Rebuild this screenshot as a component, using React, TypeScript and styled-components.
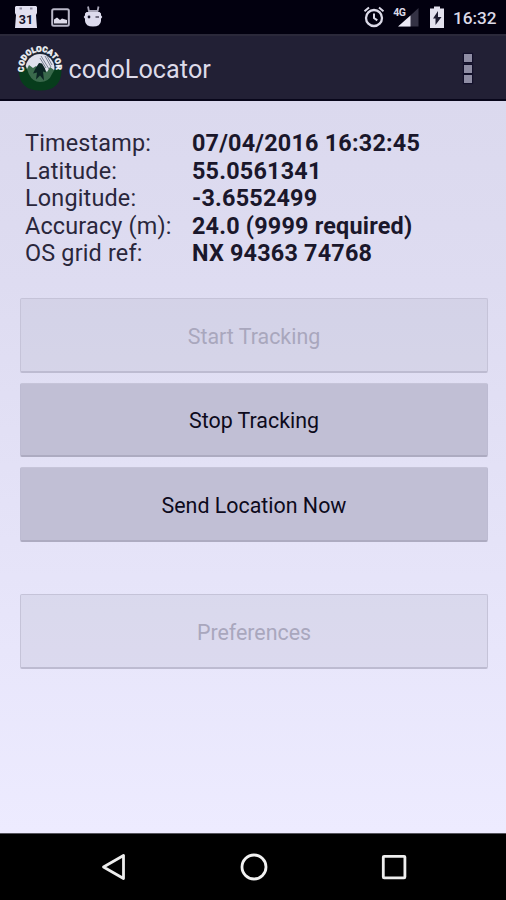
import React from 'react';
import styled, { createGlobalStyle } from 'styled-components';

const GlobalStyle = createGlobalStyle`
  * { box-sizing: border-box; }
  body { margin: 0; background: #000; }
`;

const Screen = styled.div`
  width: 506px;
  height: 900px;
  display: flex;
  flex-direction: column;
  overflow: hidden;
  font-family: Roboto, 'Liberation Sans', sans-serif;
`;

const StatusBar = styled.header`
  height: 34px;
  flex: none;
  display: flex;
  align-items: center;
  justify-content: space-between;
  padding: 0 10px 0 14px;
  background: #02000f;
  color: #dcdae8;
`;

const StatusGroup = styled.div<{ $gap: number }>`
  display: flex;
  align-items: center;
  gap: ${({ $gap }) => $gap}px;
  svg { display: block; }
`;

const Clock = styled.span`
  font-size: 17.2px;
  font-weight: 500;
  line-height: 34px;
  width: 43px;
  margin-top: 2px;
  white-space: nowrap;
`;

const ActionBar = styled.div`
  height: 67px;
  flex: none;
  display: flex;
  align-items: center;
  padding: 0 34px 0 17px;
  background: #222035;
  border-top: 2px solid #2b293a;
  border-bottom: 2px solid #08061a;
`;

const Title = styled.h1`
  flex: 1;
  margin: 3px 0 0 5.5px;
  color: #dddbe9;
  font-size: 25.2px;
  font-weight: 400;
  letter-spacing: 0.05px;
`;

const Overflow = styled.button`
  display: flex;
  flex-direction: column;
  gap: 2.6px;
  padding: 0;
  margin-top: 2px;
  border: 0;
  background: none;
`;

const Dot = styled.span`
  width: 8px;
  height: 8px;
  background: #8f8da4;
  box-shadow: 0 0 1px 1px #12102a;
`;

const Content = styled.main`
  flex: 1;
  padding: 28px 18px 0 20px;
  background: linear-gradient(#dbd9ee 0%, #dedcf1 25%, #e3e1f6 50%, #e8e6fb 75%, #edebff 100%);
`;

const Details = styled.dl`
  display: grid;
  grid-template-columns: 167px 1fr;
  grid-auto-rows: 27.6px;
  margin: 0 0 31px 5px;
  font-size: 23.4px;
  line-height: 28px;
  color: #1a172b;
  white-space: nowrap;
`;

const Label = styled.dt`
  color: #2a273c;
  letter-spacing: 0.18px;
`;

const Value = styled.dd`
  margin: 0;
  font-weight: 700;
  letter-spacing: 0.2px;
`;

const Actions = styled.div`
  display: flex;
  flex-direction: column;
  gap: 10px;
`;

const Action = styled.button<{ $spaced?: boolean }>`
  height: 74.5px;
  width: 100%;
  margin-top: ${({ $spaced }) => ($spaced ? 42 : 0)}px;
  padding: 2px 0 0;
  border: 1px solid #bdbbd2;
  border-top-color: #c6c4d9;
  border-bottom: 2px solid #adabc1;
  border-radius: 2px;
  background: #c1bfd5;
  color: #0d0a1c;
  font: 400 21.4px Roboto, 'Liberation Sans', sans-serif;

  &:disabled {
    height: 75px;
    padding-top: 3px;
    background: rgba(190, 188, 208, 0.3);
    border-color: #c5c3d8;
    border-bottom-color: #bdbbd1;
    color: #a9a7bd;
  }
`;

const NavBar = styled.nav`
  height: 67px;
  flex: none;
  display: flex;
  justify-content: space-between;
  align-items: center;
  padding: 0 98px 1px 99px;
  background: #000;
  border-top: 1px solid #55545c;
`;

const NavButton = styled.button`
  padding: 0;
  border: 0;
  background: none;
  svg { display: block; }
`;

const CalendarIcon = () => (
  <svg width="24" height="24" viewBox="0 0 24 24">
    <path d="M2 1h20l1 1v6l-1 2 1 13H1l1-13-1-2V2z" fill="#e2e0f0" />
    <path d="M5.500 3.500h2.500M16 3.500h2.500" stroke="#8f8da2" strokeWidth="2" />
    <text x="12" y="18.500" textAnchor="middle" fontSize="12.500" fontWeight="700" fill="#16142a" fontFamily="Roboto, sans-serif">31</text>
  </svg>
);

const PictureIcon = () => (
  <svg width="19" height="19" viewBox="0 0 19 19">
    <rect x="1.2" y="1.2" width="16.6" height="16.6" rx="1.5" fill="none" stroke="#b9b7c8" strokeWidth="2" />
    <path d="M3 15.500v-4l3-2 3 2.5 2-1.5 5 1.500v3.500z" fill="#dddbe9" />
  </svg>
);

const RobotIcon = () => (
  <svg width="20" height="22" viewBox="0 0 20 22">
    <path d="m5 .5 1 5M15.500 .5l-1 5M5.500 5h9.500" stroke="#aaa8ba" strokeWidth="1.8" fill="none" />
    <path d="M3.500 6h13l1.500 1.500v1.800l1.300 1.700-1.300 1.700V15q-.5 5.500-8 5.500T2 15v-2.300L.7 11 2 9.300V7.500z" fill="#dddbed" />
    <circle cx="6" cy="11" r="1.4" fill="#19172c" />
    <path d="M12.500 11H16" stroke="#4b495c" strokeWidth="1.5" />
  </svg>
);

const AlarmIcon = () => (
  <svg width="22" height="22" viewBox="-1 0 22 22" fill="none" stroke="#dcdae8">
    <circle cx="11" cy="12" r="8" strokeWidth="2.300" />
    <path d="M11 7.5V12l3.3 2.4M1.500 5.300l4.500-3.800M20.500 5.300 16 1.500" strokeWidth="2" />
  </svg>
);

const SignalIcon = () => (
  <svg width="28" height="22" viewBox="1.500 0 28 22">
    <path d="M27 2v18.500H7z" fill="#343244" />
    <path d="M19 9.500v11H6.500z" fill="#eceaf6" />
    <text x="1.800" y="9.500" fontSize="10.500" fontWeight="700" textLength="12.500" fill="#dcdae8" fontFamily="Roboto, sans-serif">4G</text>
  </svg>
);

const BatteryIcon = () => (
  <svg width="14" height="22" viewBox="0 0 14 22">
    <path d="M4 .5h6v2h4V22H0V2.500h4z" fill="#e3e1ee" />
    <path d="M8 5v6h3.500L5.500 19v-6.500H3z" fill="#1d1b30" />
  </svg>
);

const Logo = () => (
  <svg width="46" height="46" viewBox="-1 0 46 46">
    <circle cx="22" cy="24" r="21" fill="#073d1c" />
    <path d="M1 24a21 21 0 0 1 42 0z" fill="#1d2634" />
    <circle cx="22" cy="23.500" r="14.500" fill="#dfe0ec" />
    <path d="m23 11 8 13m-4-13 6 11m-11-9 6 10m1-12 5 9" stroke="#777f91" strokeWidth="1" />
    <path d="m7 28 4-8 4 3 3-2 4 4 3-2 4 4 3-5 4 3 1 5Q32 39 22 39T7 28z" fill="#3a6a4c" />
    <path d="m21 18 3 .5 3 5 1 4-3-1 1 9-4-5-4 4 1-7-4 1 3-6z" fill="#0c2524" />
    <path d="M.8 25q4.200 0 7-4l3 8q4 8 11.200 8 9 0 12-8l3-5 6.500 1q0 20.500-21.300 20.500T.8 25z" fill="#073d1c" />
    <path id="logo-arc" d="M6.200 26.500a16.200 16.200 0 1 1 31.600 0" fill="none" />
    <text fontSize="8" fontWeight="900" fill="#f1f1f6" stroke="#f1f1f6" strokeWidth="0.400" fontFamily="Roboto, sans-serif">
      <textPath href="#logo-arc" textLength="56">CODOLOCATOR</textPath>
    </text>
  </svg>
);

const details = [
  ['Timestamp:', '07/04/2016 16:32:45'],
  ['Latitude:', '55.0561341'],
  ['Longitude:', '-3.6552499'],
  ['Accuracy (m):', '24.0 (9999 required)'],
  ['OS grid ref:', 'NX 94363 74768'],
];

export default function App() {
  return (
    <Screen>
      <GlobalStyle />
      <StatusBar>
        <StatusGroup $gap={13}>
          <CalendarIcon />
          <PictureIcon />
          <RobotIcon />
        </StatusGroup>
        <StatusGroup $gap={9}>
          <AlarmIcon />
          <SignalIcon />
          <BatteryIcon />
          <Clock>16:32</Clock>
        </StatusGroup>
      </StatusBar>
      <ActionBar>
        <Logo />
        <Title>codoLocator</Title>
        <Overflow aria-label="More options">
          <Dot />
          <Dot />
          <Dot />
        </Overflow>
      </ActionBar>
      <Content>
        <Details>
          {details.map(([label, value]) => (
            <React.Fragment key={label}>
              <Label>{label}</Label>
              <Value>{value}</Value>
            </React.Fragment>
          ))}
        </Details>
        <Actions>
          <Action disabled>Start Tracking</Action>
          <Action>Stop Tracking</Action>
          <Action>Send Location Now</Action>
          <Action disabled $spaced>Preferences</Action>
        </Actions>
      </Content>
      <NavBar>
        <NavButton aria-label="Back">
          <svg width="28" height="30" viewBox="0 0 28 30">
            <path d="M24.500 3.500v23L4.500 15z" fill="none" stroke="#eee" strokeWidth="2.800" strokeLinejoin="round" />
          </svg>
        </NavButton>
        <NavButton aria-label="Home">
          <svg width="28" height="28" viewBox="0 0 28 28">
            <circle cx="14" cy="14" r="12" fill="none" stroke="#f2f2f2" strokeWidth="2.800" />
          </svg>
        </NavButton>
        <NavButton aria-label="Recent apps">
          <svg width="28" height="28" viewBox="0 0 28 28">
            <rect x="3.300" y="3.300" width="21.600" height="21.600" rx="0.800" fill="none" stroke="#eee" strokeWidth="2.800" />
          </svg>
        </NavButton>
      </NavBar>
    </Screen>
  );
}
